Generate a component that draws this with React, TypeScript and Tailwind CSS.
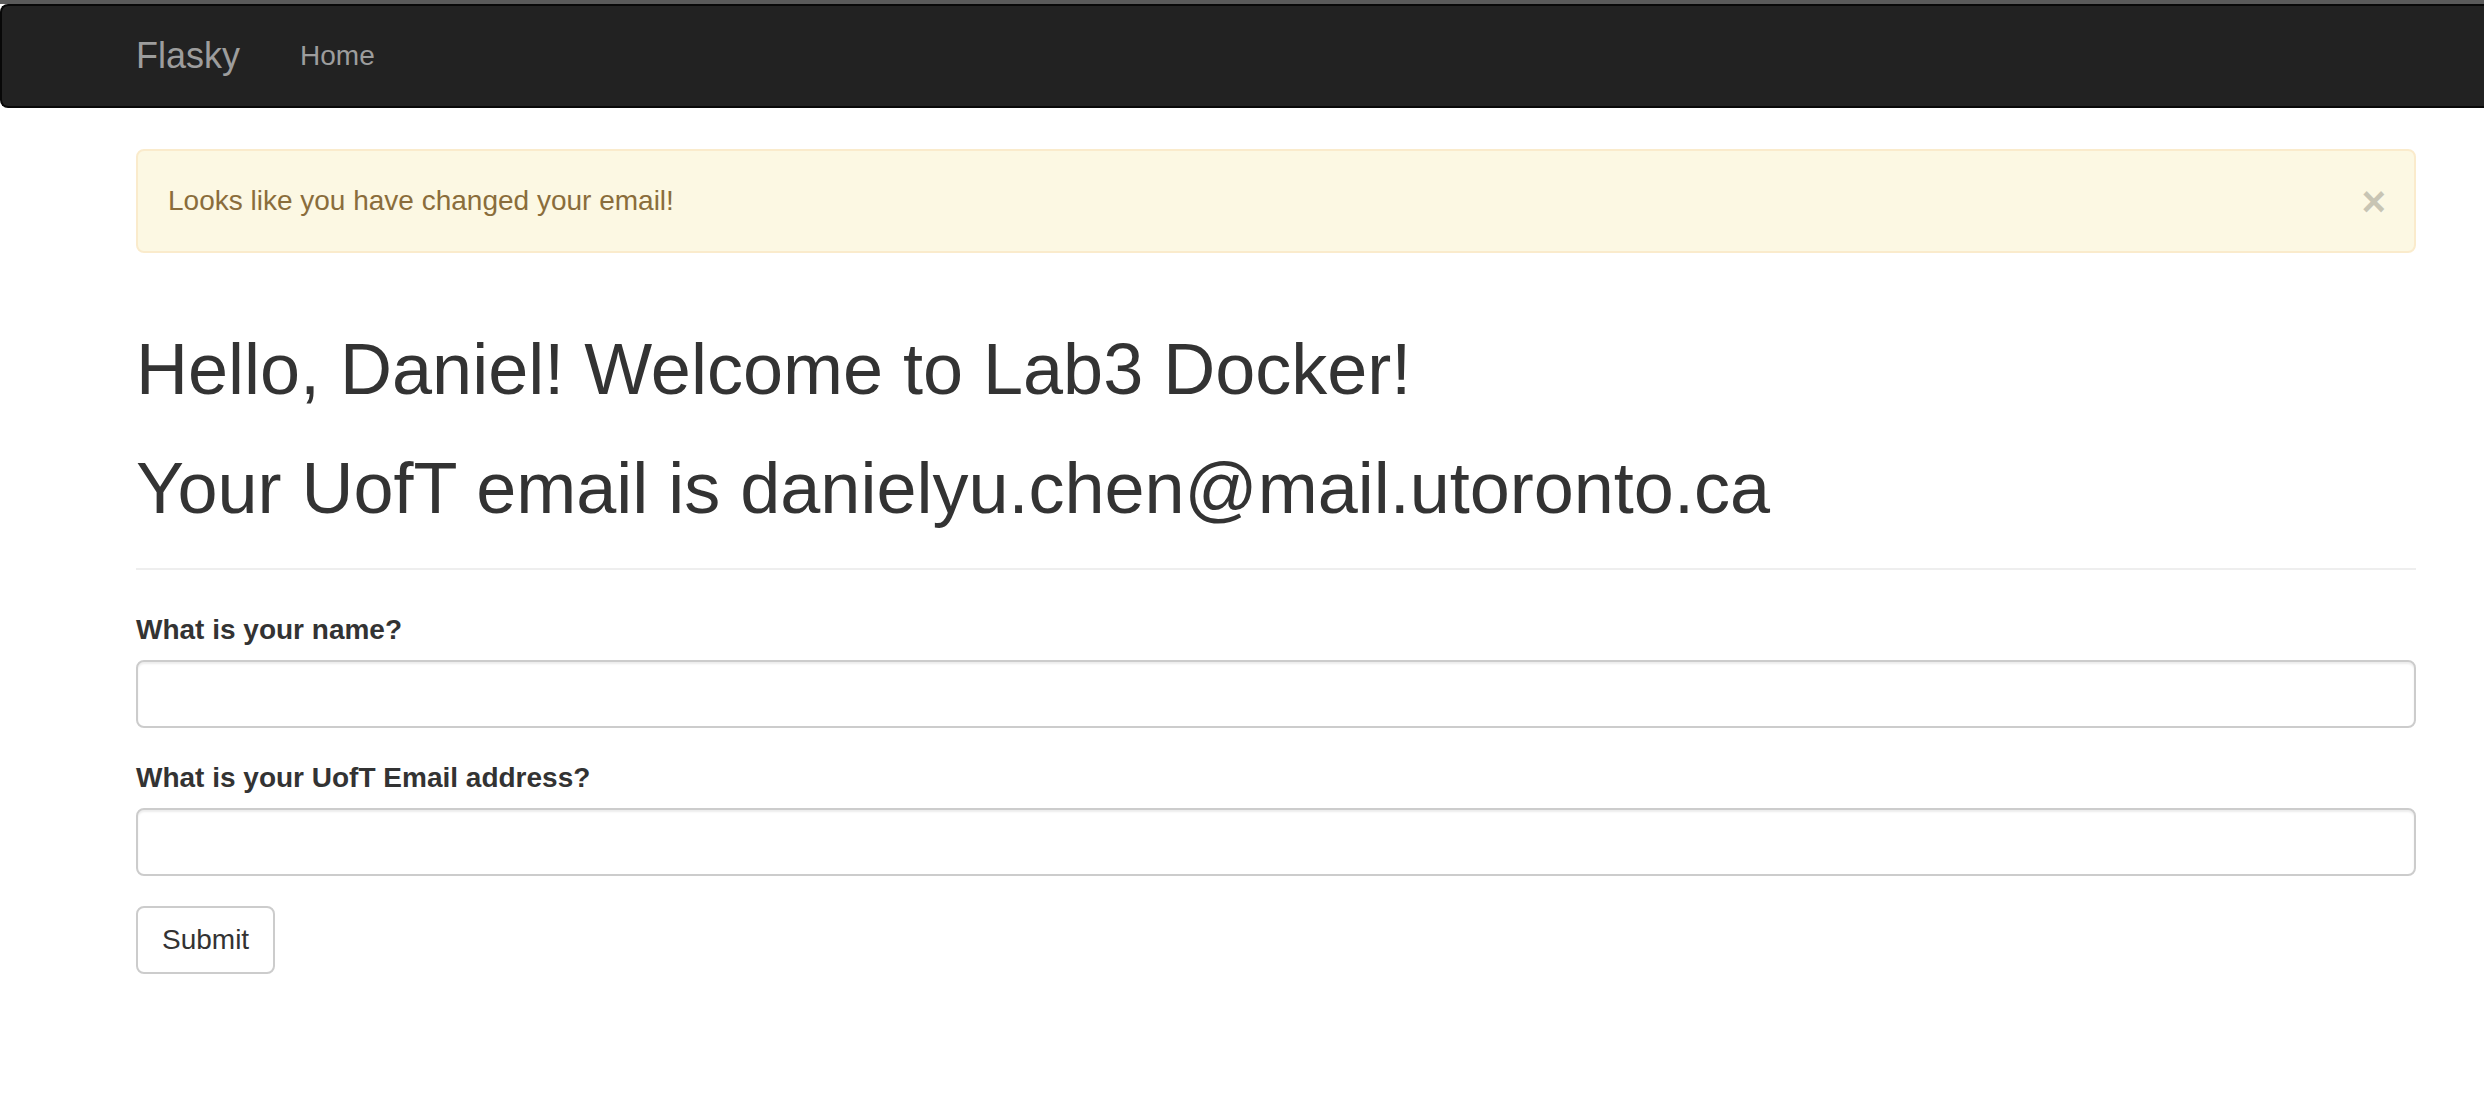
import React from 'react'

// Flasky home page: navbar, flash alert, greeting and the name/email form
export default function App() {
  return (
    <div className="min-h-screen bg-white font-['Liberation_Sans',Arial,sans-serif] text-[28px] leading-[40px] text-[#333]">
      {/* thin grey strip above the navbar */}
      <div className="h-[4px] bg-[#5a5a5a]" />

      {/* Navbar */}
      <nav className="h-[104px] mb-[41px] bg-[#222] border-2 border-r-0 border-[#080808] rounded-l-[8px]">
        <div className="ml-[106px] w-[2340px] px-[30px] h-full flex items-center">
          <a href="#" className="-ml-[2px] text-[36px] leading-[40px] text-[#9d9d9d] pr-[30px]">
            Flasky
          </a>
          <a href="#" className="text-[28px] leading-[40px] text-[#9d9d9d] pl-[30px]">
            Home
          </a>
        </div>
      </nav>

      <div className="ml-[106px] w-[2340px] px-[30px]">
        {/* Flash message */}
        <div className="flex items-center justify-between h-[104px] pl-[30px] pr-[70px] bg-[#fcf8e3] border-2 border-[#faebcc] rounded-[8px] text-[#8a6d3b]">
          <span>Looks like you have changed your email!</span>
          <button
            type="button"
            className="-mr-[42px] mt-[2px] text-[42px] leading-[42px] font-bold text-black opacity-20 [text-shadow:0_2px_0_#fff]"
          >
            ×
          </button>
        </div>

        {/* Greeting */}
        <div className="mt-[77px] pb-[40px] border-b-2 border-[#eee]">
          <h1 className="text-[72px] leading-[79px] font-normal">
            Hello, Daniel! Welcome to Lab3 Docker!
          </h1>
          <h1 className="mt-[40px] text-[72px] leading-[79px] font-normal">
            Your UofT email is danielyu.chen@mail.utoronto.ca
          </h1>
        </div>

        {/* Form */}
        <form className="mt-[40px]" onSubmit={(e) => e.preventDefault()}>
          <div className="mb-[30px]">
            <label className="block mb-[10px] font-bold">What is your name?</label>
            <input
              type="text"
              className="block w-full h-[68px] px-[24px] border-2 border-[#ccc] rounded-[8px] shadow-[inset_0_2px_2px_rgba(0,0,0,0.075)] outline-none"
            />
          </div>
          <div className="mb-[30px]">
            <label className="block mb-[10px] font-bold">What is your UofT Email address?</label>
            <input
              type="text"
              className="block w-full h-[68px] px-[24px] border-2 border-[#ccc] rounded-[8px] shadow-[inset_0_2px_2px_rgba(0,0,0,0.075)] outline-none"
            />
          </div>
          <button
            type="submit"
            className="h-[68px] px-[24px] bg-white border-2 border-[#ccc] rounded-[8px] text-[28px] leading-[40px] text-[#333]"
          >
            Submit
          </button>
        </form>
      </div>
    </div>
  )
}
